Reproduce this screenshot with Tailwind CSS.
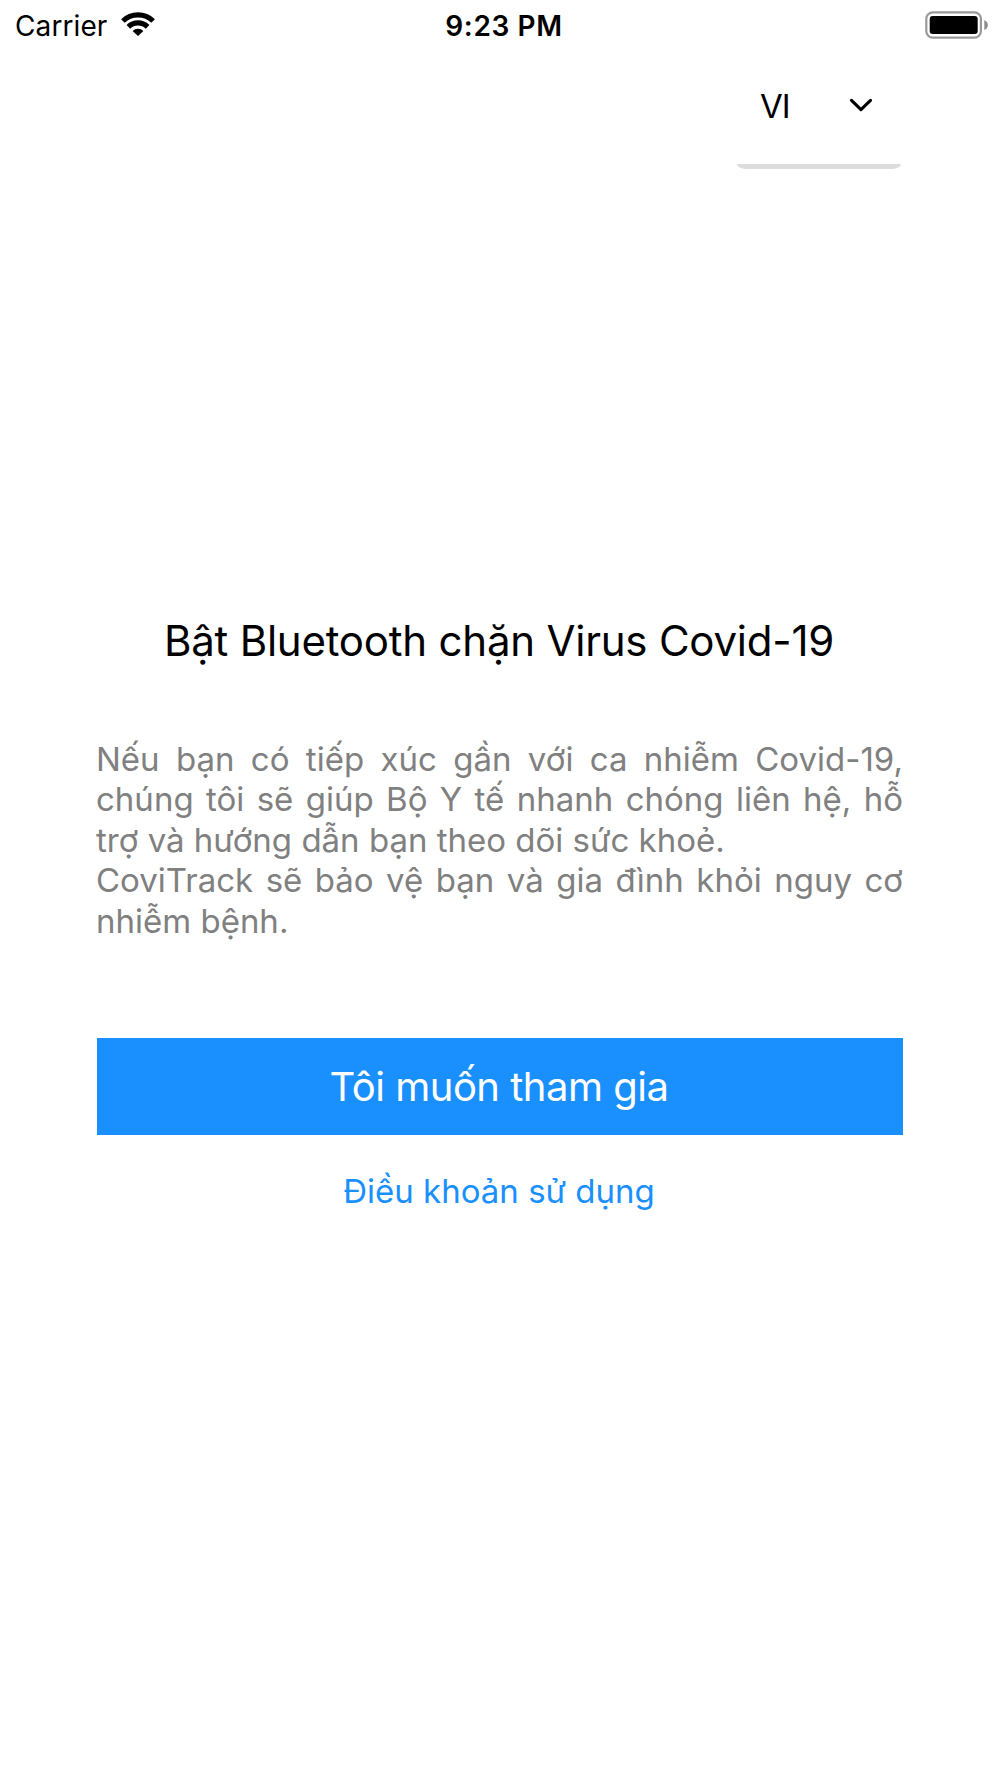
<!DOCTYPE html>
<html lang="vi">
<head>
  <meta charset="UTF-8" />
  <meta name="viewport" content="width=device-width, initial-scale=1.0" />
  <title>CoviTrack</title>
  <!-- Tailwind -->
  <script src="https://cdn.jsdelivr.net/npm/@tailwindcss/browser@4"></script>
</head>
<body class="h-[1778px] overflow-hidden bg-white text-black font-['Inter',sans-serif]">
  <!-- Status bar -->
  <header class="grid grid-cols-3 items-center h-[51px] pl-[15px] pr-[12px]">
    <div class="flex items-center gap-[14px]">
      <span class="text-[28px] leading-none tracking-[0.1px]">Carrier</span>
      <svg class="w-[34px] h-[24px] -mt-[3px]" viewBox="0 0 34 24" fill="none" stroke="#000" stroke-width="5.2">
        <path d="M1.9 9A21.6 21.6 0 0 1 32.1 9" />
        <path d="M7.4 14.8A13.8 13.8 0 0 1 26.6 14.8" />
        <path d="M17 24L11.6 18.9A7.9 7.9 0 0 1 22.4 18.9Z" fill="#000" stroke="none" />
      </svg>
    </div>
    <span class="pl-[5px] text-[28px] leading-none font-semibold tracking-[0.6px] text-center whitespace-nowrap">9:23 PM</span>
    <svg class="justify-self-end w-[63px] h-[28px] -mt-[2px]" viewBox="0 0 63 28">
      <rect x="1.3" y="1.3" width="54.6" height="25.4" rx="6.5" fill="none" stroke="#999" stroke-width="2.2" />
      <rect x="4.7" y="5" width="48" height="18" rx="3" />
      <path d="M59.3 9Q62.8 10.5 62.8 14T59.3 19Z" fill="#8c8c8c" />
    </svg>
  </header>

  <!-- Language -->
  <div class="ml-[737px] w-[164px] h-[118px] flex flex-col justify-between">
    <div class="flex items-center justify-between h-[109px] pl-[23px] pr-[28px]">
      <span class="pt-[2px] text-[33px] leading-none tracking-[-1px]">VI</span>
      <svg class="w-[24px] h-[14px] -mt-[1px]" viewBox="0 0 24 14" fill="none" stroke="#000" stroke-width="3.1" stroke-linecap="round" stroke-linejoin="round">
        <path d="M2.5 2.4L12 11.6L21.5 2.4" />
      </svg>
    </div>
    <div class="h-[5px] shrink-0 bg-[#ddd] rounded-b-[9px_5px]"></div>
  </div>

  <!-- Content -->
  <main class="flex flex-col px-[97px] pt-[447px]">
    <h1 class="pr-[2px] text-[42px] leading-[50px] tracking-[-0.22px] text-center whitespace-nowrap">Bật Bluetooth chặn Virus Covid-19</h1>
    <p class="-ml-[1px] mt-[73px] text-[33px] leading-[40.4px] text-justify text-[#808080]">
      Nếu bạn có tiếp xúc gần với ca nhiễm Covid-19, chúng tôi sẽ giúp Bộ Y tế nhanh chóng liên hệ, hỗ trợ và hướng dẫn bạn theo dõi sức khoẻ.<br />
      CoviTrack sẽ bảo vệ bạn và gia đình khỏi nguy cơ nhiễm bệnh.
    </p>
    <button class="mt-[97px] h-[96.5px] pt-[2px] pr-[2px] bg-[#1a90ff] text-white text-[40px] tracking-[-0.5px]">Tôi muốn tham gia</button>
    <a class="mt-[36.5px] pr-[2px] text-[33px] leading-[40px] text-center text-[#1a90ff]">Điều khoản sử dụng</a>
  </main>
</body>
</html>
